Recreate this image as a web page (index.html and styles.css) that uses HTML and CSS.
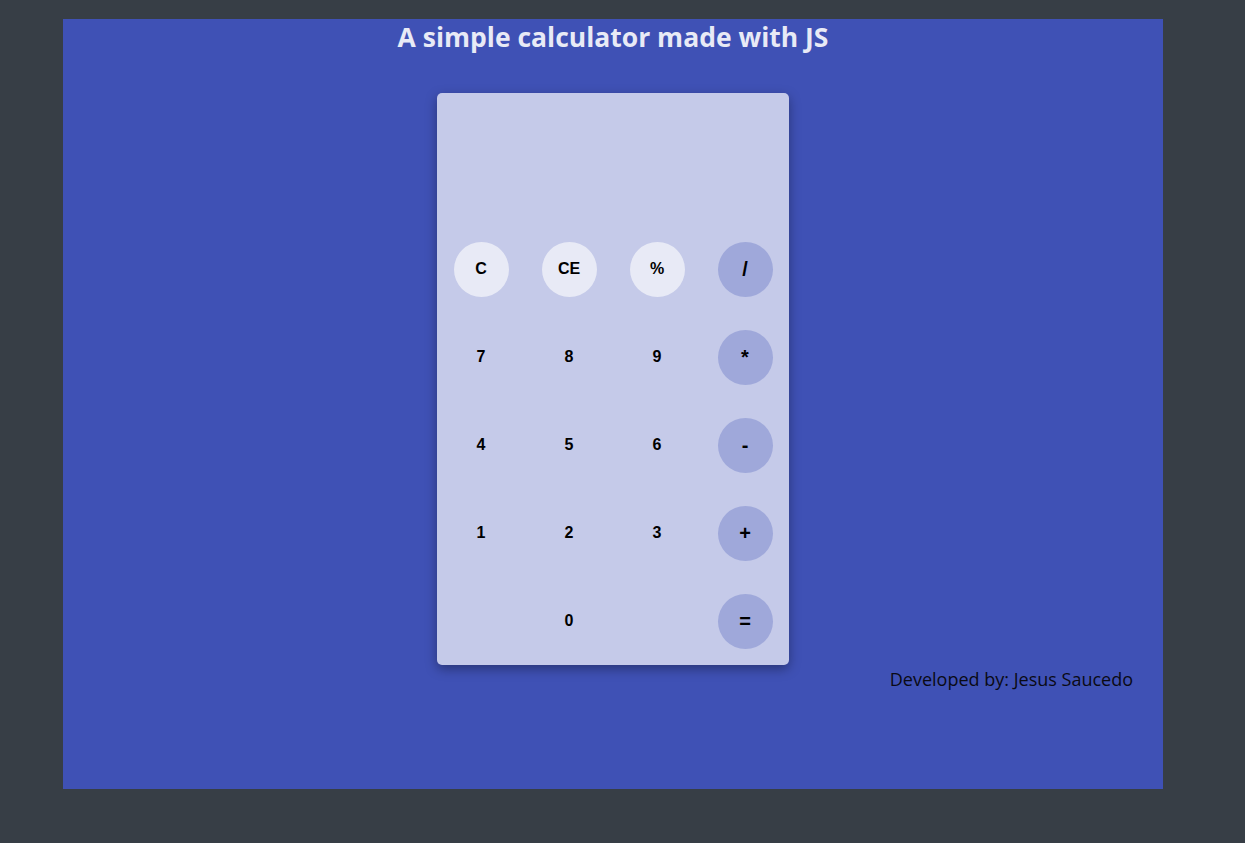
FILE: index.html
```html
<!DOCTYPE html>
<html lang="en">
<head>
<meta charset="utf-8">
<title>Calculator</title>
<link rel="stylesheet" href="styles.css">
</head>
<body>
<main class="app">
  <h1 class="title">A simple calculator made with JS</h1>
  <section class="calc">
    <div class="display"></div>
    <div class="keys">
      <button class="key fn">C</button>
      <button class="key fn">CE</button>
      <button class="key fn">%</button>
      <button class="key op">/</button>
      <button class="key">7</button>
      <button class="key">8</button>
      <button class="key">9</button>
      <button class="key op">*</button>
      <button class="key">4</button>
      <button class="key">5</button>
      <button class="key">6</button>
      <button class="key op">-</button>
      <button class="key">1</button>
      <button class="key">2</button>
      <button class="key">3</button>
      <button class="key op">+</button>
      <span class="key empty"></span>
      <button class="key">0</button>
      <span class="key empty"></span>
      <button class="key op">=</button>
    </div>
  </section>
  <footer class="credit">Developed by: Jesus Saucedo</footer>
</main>
</body>
</html>
```
FILE: styles.css
```css
html, body {
  margin: 0;
  padding: 0;
}
body {
  background: #373e46;
  font-family: "Open Sans", "Noto Sans", sans-serif;
  padding: 19px 0 0 63px;
  height: 843px;
  box-sizing: border-box;
}
.app {
  width: 1100px;
  height: 770px;
  background: #3f51b5;
  display: flex;
  flex-direction: column;
  align-items: center;
  box-sizing: border-box;
  padding-top: 3px;
}
.title {
  margin: 0;
  font-size: 26.5px;
  line-height: 30px;
  font-weight: 700;
  color: #e8eaf6;
}
.calc {
  margin-top: 41px;
  width: 352px;
  height: 572px;
  background: #c5cae9;
  border-radius: 5px;
  box-shadow: 0 4px 12px rgba(0, 0, 0, 0.35);
  display: flex;
  flex-direction: column;
}
.display {
  height: 132px;
}
.keys {
  display: grid;
  grid-template-columns: repeat(4, 88px);
  grid-auto-rows: 88px;
  place-items: center;
}
.key {
  width: 55px;
  height: 55px;
  border: none;
  border-radius: 50%;
  background: transparent;
  font-family: "Liberation Sans", Arial, sans-serif;
  font-weight: 700;
  font-size: 16px;
  color: #000;
  padding: 0;
  display: flex;
  align-items: center;
  justify-content: center;
}
.key.fn {
  background: #e8eaf6;
}
.key.op {
  background: #9fa8da;
  font-size: 20px;
}
.credit {
  align-self: flex-end;
  margin: 2px 30px 0 0;
  font-size: 18px;
  color: #0a0a14;
}
```
